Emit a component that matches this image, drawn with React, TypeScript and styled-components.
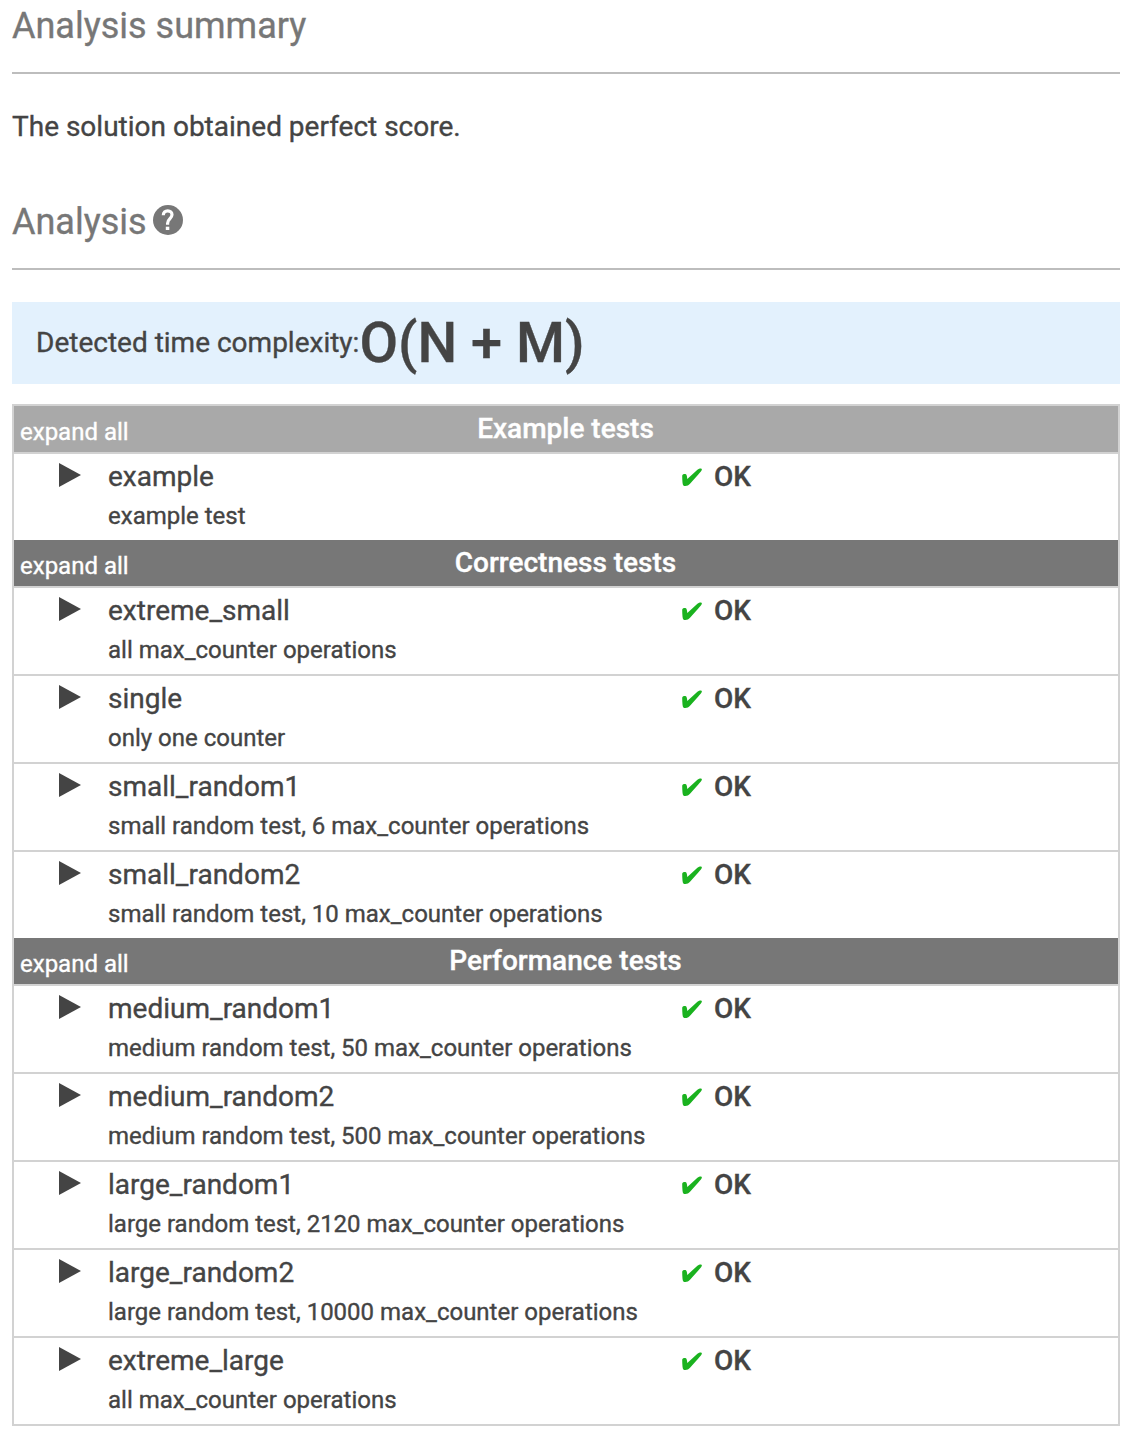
import React from 'react';
import styled, { createGlobalStyle } from 'styled-components';

const Global = createGlobalStyle`
  * { box-sizing: border-box; }
  body {
    margin: 0;
    background: #fff;
    color: #444;
    font-family: Roboto, "Liberation Sans", sans-serif;
    -webkit-text-stroke: 0.35px currentColor;
  }
  svg { display: block; }
`;

const Page = styled.main`
  display: flex;
  flex-direction: column;
  width: 1128px;
  height: 1436px;
  padding: 0 8px 0 12px;
  overflow: hidden;
`;

const Heading = styled.h2`
  display: flex;
  align-items: flex-start;
  gap: 6px;
  margin: 0;
  height: 74px;
  border-bottom: 2px solid #bdbdbd;
  color: #777;
  font-size: 36px;
  line-height: 52px;
  font-weight: 400;
`;

const HelpIcon = styled.svg`
  width: 30px;
  height: 30px;
  margin-top: 9px;
`;

const Summary = styled.p`
  margin: 35px 0 51px;
  font-size: 28px;
  line-height: 36px;
`;

const Complexity = styled.div`
  display: flex;
  align-items: center;
  height: 82px;
  margin: 32px 0 20px;
  padding-left: 24px;
  background: #e3f1fd;
`;

const ComplexityLabel = styled.span`
  padding-bottom: 2px;
  font-size: 28px;
`;

const BigO = styled.strong`
  font-size: 56px;
  font-weight: 500;
`;

const Table = styled.section`
  border: 2px solid #d2d2d2;
`;

const GroupHeader = styled.header<{ $light?: boolean }>`
  display: grid;
  grid-template-columns: 1fr auto 1fr;
  height: 46px;
  padding: 0 7px 0 6px;
  background: ${(p) => (p.$light ? '#a9a9a9' : '#777')};
  color: #fff;
`;

const Expand = styled.span`
  font-size: 24px;
  line-height: 52px;
`;

const GroupTitle = styled.strong`
  font-size: 28px;
  line-height: 46px;
  font-weight: 500;
`;

const Row = styled.div`
  display: grid;
  grid-template-columns: 94px 573px 1fr;
  height: 88px;
  border-top: 2px solid #d2d2d2;
`;

const Arrow = styled.svg`
  width: 22px;
  height: 24px;
  margin: 9px 0 0 45px;
`;

const Name = styled.div`
  font-size: 28px;
  line-height: 46px;
`;

const Description = styled.div`
  font-size: 24px;
  line-height: 32px;
`;

const Status = styled.div`
  display: flex;
  align-items: flex-start;
  gap: 11px;
  font-size: 28px;
  line-height: 46px;
  font-weight: 500;
`;

const Check = styled.svg`
  width: 22px;
  height: 22px;
  margin-top: 13px;
`;

type Test = [name: string, description: string];

const groups: { title: string; light?: boolean; tests: Test[] }[] = [
  { title: 'Example tests', light: true, tests: [['example', 'example test']] },
  {
    title: 'Correctness tests',
    tests: [
      ['extreme_small', 'all max_counter operations'],
      ['single', 'only one counter'],
      ['small_random1', 'small random test, 6 max_counter operations'],
      ['small_random2', 'small random test, 10 max_counter operations'],
    ],
  },
  {
    title: 'Performance tests',
    tests: [
      ['medium_random1', 'medium random test, 50 max_counter operations'],
      ['medium_random2', 'medium random test, 500 max_counter operations'],
      ['large_random1', 'large random test, 2120 max_counter operations'],
      ['large_random2', 'large random test, 10000 max_counter operations'],
      ['extreme_large', 'all max_counter operations'],
    ],
  },
];

function TestRow({ test: [name, description] }: { test: Test }) {
  return (
    <Row>
      <Arrow viewBox="0 0 22 24"><path d="M0 0L22 12L0 24Z" fill="#444" /></Arrow>
      <div>
        <Name>{name}</Name>
        <Description>{description}</Description>
      </div>
      <Status>
        <Check viewBox="0 0 22 22">
          <path d="M1.2 9C1.2 7.6 2.4 7.1 3.8 7.1C5.5 7.1 5.9 8.2 6.3 11.9L16.4 2.8C18.2 1.4 20.9 1.2 20.9 2.2C20.9 3.8 18.9 5.5 17.3 7.4L9 16.8C7.5 18.4 6.3 19 4.3 19C2.2 19 1.8 18 1.5 15.4C1.3 13 1.2 11 1.2 9Z" fill="#1ab21f" />
        </Check>
        <span>OK</span>
      </Status>
    </Row>
  );
}

export default function App() {
  return (
    <>
      <Global />
      <Page>
        <Heading>Analysis summary</Heading>
        <Summary>The solution obtained perfect score.</Summary>
        <Heading>
          Analysis
          <HelpIcon viewBox="0 0 30 30" fill="none">
            <circle cx="15" cy="15" r="15" fill="#777" />
            <path d="M10.3 10.2C10.3 7.5 12.2 5.8 14.7 5.8C17.3 5.8 19 7.5 19 9.8C19 13.4 14.6 13.8 14.6 18.2V19.7" stroke="#fff" strokeWidth="3.2" />
            <rect x="12.8" y="21.7" width="3.5" height="3.3" fill="#fff" />
          </HelpIcon>
        </Heading>
        <Complexity>
          <ComplexityLabel>Detected time complexity:</ComplexityLabel>
          <BigO>O(N + M)</BigO>
        </Complexity>
        <Table>
          {groups.map((group) => (
            <React.Fragment key={group.title}>
              <GroupHeader $light={group.light}>
                <Expand>expand all</Expand>
                <GroupTitle>{group.title}</GroupTitle>
              </GroupHeader>
              {group.tests.map((test) => <TestRow key={test[0]} test={test} />)}
            </React.Fragment>
          ))}
        </Table>
      </Page>
    </>
  );
}
